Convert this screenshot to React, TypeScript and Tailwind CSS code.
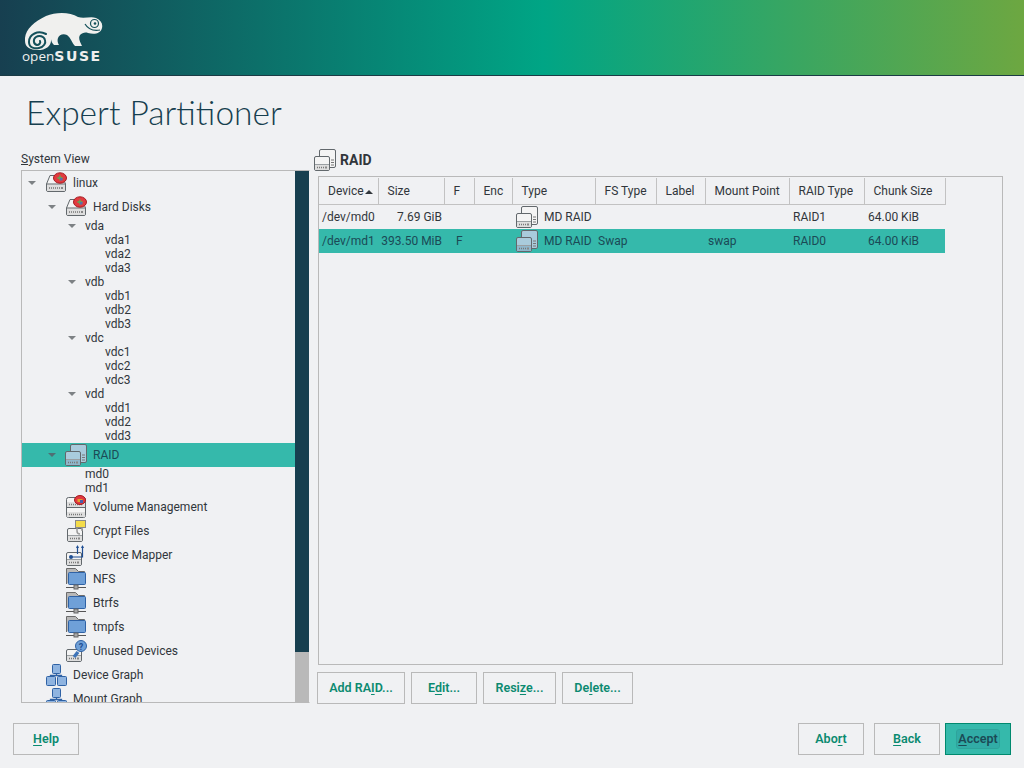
import React from "react"

const sans = "font-['Roboto',sans-serif]"

function Hdd({ x = 0, y = 0, w = 20, h = 13, tint = false }: { x?: number; y?: number; w?: number; h?: number; tint?: boolean }) {
  const face = tint ? "#a9cbdc" : "#f4f4f4"
  const low = tint ? "#8fb6cb" : "#dedede"
  return (
    <g>
      <rect x={x + 0.5} y={y + 0.5} width={w - 1} height={h - 1} rx="1.5" fill={face} stroke="#62686c" />
      <rect x={x + 1} y={y + h - 6} width={w - 2} height="5" fill={low} />
      <path d={`M${x + 1} ${y + h - 6.5}h${w - 2}`} stroke="#9a9fa2" />
      <path d={`M${x + 3} ${y + h - 3.5}h${w - 9}`} stroke="#777" strokeWidth="1.5" strokeDasharray="1 1" />
      <rect x={x + w - 5} y={y + h - 4.5} width="2" height="2" fill="#888" />
    </g>
  )
}

function DiskIcon() {
  return (
    <svg width="22" height="24" viewBox="0 0 22 24" className="shrink-0">
      <path d="M1.500 13L5 4.500H17L20.500 13V19a1.500 1.500 0 0 1-1.500 1.500H3A1.500 1.500 0 0 1 1.500 19z" fill="#f4f4f4" stroke="#62686c" />
      <path d="M2 13.500h18v6.500H2z" fill="#dedede" />
      <path d="M1.500 13h19" stroke="#62686c" />
      <path d="M4 17h11" stroke="#777" strokeWidth="1.500" strokeDasharray="1 1" />
      <rect x="16" y="16" width="2" height="2" fill="#888" />
      <ellipse cx="15" cy="7" rx="6.500" ry="5.200" fill="#e23a3f" stroke="#a51d22" />
      <path d="M15 4.500v5M12.500 7h5" stroke="#6f9a55" strokeWidth="1.800" />
      <path d="M15 7h2.500v2.500H15z" fill="#5a6ea8" />
    </svg>
  )
}

function RaidIcon({ tint = false }: { tint?: boolean }) {
  const face = tint ? "#a9cbdc" : "#f4f4f4"
  return (
    <svg width="22" height="24" viewBox="0 0 22 24" className="shrink-0">
      <rect x="5.500" y="1.500" width="16" height="18" rx="1.500" fill={face} stroke="#62686c" />
      <path d="M17 12h3M17 14.500h3M17 17h3" stroke="#777" />
      <Hdd x={0} y={8} w={16} h={15} tint={tint} />
    </svg>
  )
}

function VolumeIcon() {
  return (
    <svg width="22" height="24" viewBox="0 0 22 24" className="shrink-0">
      <rect x="1.500" y="2.500" width="19" height="20" rx="2" fill="#f4f4f4" stroke="#62686c" />
      <path d="M1.500 12.500h19" stroke="#62686c" />
      <rect x="2" y="7" width="18" height="5" fill="#dedede" />
      <rect x="2" y="17" width="18" height="5" fill="#dedede" />
      <path d="M4 9.500h14M4 19.500h14" stroke="#777" strokeWidth="1.500" strokeDasharray="1 1" />
      <ellipse cx="15" cy="5" rx="5.500" ry="4.500" fill="#e23a3f" stroke="#a51d22" />
      <path d="M12.500 4h5v3h-5z" fill="#e0a030" />
      <path d="M15 5h3v3h-3z" fill="#4a5ea8" />
    </svg>
  )
}

function CryptIcon() {
  return (
    <svg width="22" height="24" viewBox="0 0 22 24" className="shrink-0">
      <Hdd x={2} y={9} w={16} h={14} />
      <rect x="10.500" y="1.500" width="10" height="7" fill="#f4dc4a" stroke="#8a8a8a" />
      <path d="M12 9v3a3 3 0 0 0 3 3M17 9v3" fill="none" stroke="#9a9a9a" strokeWidth="1.500" />
    </svg>
  )
}

function MapperIcon() {
  return (
    <svg width="22" height="24" viewBox="0 0 22 24" className="shrink-0">
      <Hdd x={1} y={9} w={16} h={14} />
      <circle cx="6" cy="14" r="2" fill="#1f4e93" />
      <path d="M6 14h11.500V3M12.500 11V3" fill="none" stroke="#1f4e93" strokeWidth="1.200" />
      <path d="M11 5l1.500-3L14 5zM16 5l1.500-3L19 5z" fill="#1f4e93" />
    </svg>
  )
}

function FolderNetIcon() {
  return (
    <svg width="22" height="24" viewBox="0 0 22 24" className="shrink-0">
      <path d="M1.500 17V1.500h9l3 3h6V6" fill="#b8b8b8" stroke="#6b6b6b" />
      <rect x="3.500" y="5.500" width="17" height="12" rx="1" fill="#6fa0d8" stroke="#2f62a5" />
      <path d="M1 20.500h20" stroke="#555" />
      <rect x="9" y="18" width="4" height="4" fill="#a8a8a8" stroke="#666" />
    </svg>
  )
}

function UnusedIcon() {
  return (
    <svg width="22" height="24" viewBox="0 0 22 24" className="shrink-0">
      <Hdd x={1} y={10} w={16} h={13} />
      <path d="M9 18l4-5" stroke="#3f74b8" strokeWidth="3.500" />
      <circle cx="16" cy="7" r="5.500" fill="#6fa0d8" stroke="#2f62a5" />
      <text x="16" y="10.500" textAnchor="middle" fontSize="9" fontWeight="700" fontFamily="Roboto, sans-serif" fill="#1f4e93">?</text>
    </svg>
  )
}

function GraphIcon() {
  return (
    <svg width="22" height="24" viewBox="0 0 22 24" className="shrink-0">
      <path d="M11.500 10v3M5.500 14v-1.500h11V14" fill="none" stroke="#2f62a5" strokeWidth="1.300" />
      <rect x="7.500" y="1.500" width="8" height="9" rx="1" fill="#8fb4e0" stroke="#2f62a5" />
      <rect x="1.500" y="13.500" width="9" height="9" rx="1" fill="#8fb4e0" stroke="#2f62a5" />
      <rect x="12.500" y="13.500" width="9" height="9" rx="1" fill="#8fb4e0" stroke="#2f62a5" />
    </svg>
  )
}

function Logo() {
  return (
    <div className="flex flex-col w-[84px] h-[52px] shrink-0">
      <svg width="80" height="38" viewBox="25 13 80 38" className="ml-[3px] shrink-0">
        <path
          d="M25 41C24 31 33 22 46 16C56 12 70 12 78 17C84 19 91 16 96 18C101 20 103 24 102 28C101 33 95 35 88 33C85 32 82 33 80 35C78 38 80 42 82 46H75C72 43 71 38 67 35C63 33 59 35 58 38C57 41 58 43 59 45H54C52 43 51 41 51 38C52 46 46 50 38 50C30 50 25 47 25 41Z"
          fill="#f0f0ee"
        />
        <path
          d="M46 34C38 30 29 34 29 42C29 48 35 49 39 48C44 47 46 43 45 40C44 36 39 35 36 37C33 39 33 44 37 45C39 45 41 43 40 41"
          fill="none"
          stroke="#14505a"
          strokeWidth="2"
          strokeLinecap="round"
        />
        <circle cx="94.500" cy="23.500" r="4" fill="none" stroke="#14505a" strokeWidth="1.200" />
        <circle cx="95" cy="23.500" r="1.300" fill="#14505a" />
        <path d="M85 24C88 29 94 31 100 30" fill="none" stroke="#14505a" strokeWidth="1.200" />
      </svg>
      <div className="flex items-baseline leading-[14px] -mt-[2px] text-[#f0f0ee]">
        <span className="text-[13.500px] font-['Open_Sans',sans-serif]">open</span>
        <span className="text-[14px] font-bold tracking-[1.600px] font-['DejaVu_Sans',sans-serif]">SUSE</span>
      </div>
    </div>
  )
}

type TreeRow = {
  label: string
  pad: string
  tall?: boolean
  arrow?: boolean
  selected?: boolean
  icon?: React.ReactNode
}

const treeRows: TreeRow[] = [
  { label: "linux", pad: "pl-[6px]", tall: true, arrow: true, icon: <DiskIcon /> },
  { label: "Hard Disks", pad: "pl-[26px]", tall: true, arrow: true, icon: <DiskIcon /> },
  { label: "vda", pad: "pl-[46px]", arrow: true },
  { label: "vda1", pad: "pl-[83px]" },
  { label: "vda2", pad: "pl-[83px]" },
  { label: "vda3", pad: "pl-[83px]" },
  { label: "vdb", pad: "pl-[46px]", arrow: true },
  { label: "vdb1", pad: "pl-[83px]" },
  { label: "vdb2", pad: "pl-[83px]" },
  { label: "vdb3", pad: "pl-[83px]" },
  { label: "vdc", pad: "pl-[46px]", arrow: true },
  { label: "vdc1", pad: "pl-[83px]" },
  { label: "vdc2", pad: "pl-[83px]" },
  { label: "vdc3", pad: "pl-[83px]" },
  { label: "vdd", pad: "pl-[46px]", arrow: true },
  { label: "vdd1", pad: "pl-[83px]" },
  { label: "vdd2", pad: "pl-[83px]" },
  { label: "vdd3", pad: "pl-[83px]" },
  { label: "RAID", pad: "pl-[26px]", tall: true, arrow: true, selected: true, icon: <RaidIcon tint /> },
  { label: "md0", pad: "pl-[63px]" },
  { label: "md1", pad: "pl-[63px]" },
  { label: "Volume Management", pad: "pl-[43px]", tall: true, icon: <VolumeIcon /> },
  { label: "Crypt Files", pad: "pl-[43px]", tall: true, icon: <CryptIcon /> },
  { label: "Device Mapper", pad: "pl-[43px]", tall: true, icon: <MapperIcon /> },
  { label: "NFS", pad: "pl-[43px]", tall: true, icon: <FolderNetIcon /> },
  { label: "Btrfs", pad: "pl-[43px]", tall: true, icon: <FolderNetIcon /> },
  { label: "tmpfs", pad: "pl-[43px]", tall: true, icon: <FolderNetIcon /> },
  { label: "Unused Devices", pad: "pl-[43px]", tall: true, icon: <UnusedIcon /> },
  { label: "Device Graph", pad: "pl-[23px]", tall: true, icon: <GraphIcon /> },
  { label: "Mount Graph", pad: "pl-[23px]", tall: true, icon: <GraphIcon /> },
]

function Tree() {
  return (
    <div className="flex h-[533px] border-y border-l border-r border-[#b9b9b9] border-r-transparent overflow-hidden">
      <div className="flex-1 min-w-0">
        {treeRows.map((row) => (
          <div
            key={row.label}
            className={`flex items-center whitespace-nowrap ${row.pad} ${row.tall ? "h-[24px]" : "h-[14px]"} ${row.selected ? "bg-[#35b9ab] text-[#1b4a56]" : ""}`}
          >
            {row.arrow && (
              <span className={`w-0 h-0 mr-[9px] border-x-[4px] border-x-transparent border-t-[4px] shrink-0 ${row.selected ? "border-t-[#4f6f74]" : "border-t-[#7d8184]"}`} />
            )}
            {row.icon}
            <span className={row.icon ? "ml-[6px]" : ""}>{row.label}</span>
          </div>
        ))}
      </div>
      <div className="w-[14px] shrink-0 flex flex-col bg-[#b9b9b9]">
        <div className="h-[481px] bg-[#173f4f]" />
      </div>
    </div>
  )
}

const headers = [
  { label: "Device", width: "w-[59px]", sort: true },
  { label: "Size", width: "w-[66px]" },
  { label: "F", width: "w-[30px]" },
  { label: "Enc", width: "w-[38px]" },
  { label: "Type", width: "w-[83px]" },
  { label: "FS Type", width: "w-[61px]" },
  { label: "Label", width: "w-[49px]" },
  { label: "Mount Point", width: "w-[84px]" },
  { label: "RAID Type", width: "w-[75px]" },
  { label: "Chunk Size", width: "w-[81px]" },
]

const devices = [
  { device: "/dev/md0", size: "7.69 GiB", f: "", fs: "", mount: "", raid: "RAID1", chunk: "64.00 KiB", selected: false },
  { device: "/dev/md1", size: "393.50 MiB", f: "F", fs: "Swap", mount: "swap", raid: "RAID0", chunk: "64.00 KiB", selected: true },
]

function DeviceTable() {
  return (
    <div className="h-[489px] border border-[#b9b9b9] pt-[1px]">
      <table className="table-fixed border-collapse w-[626px]">
        <thead>
          <tr className="h-[26px]">
            {headers.map((h) => (
              <th key={h.label} className={`${h.width} p-0 pl-[9px] text-left font-normal border-r border-b border-[#c2c2c2] whitespace-nowrap`}>
                {h.label}
                {h.sort && <span className="inline-block align-middle ml-[1px] w-0 h-0 border-x-[4px] border-x-transparent border-b-[4px] border-b-[#31363b]" />}
              </th>
            ))}
          </tr>
        </thead>
        <tbody>
          {devices.map((d) => (
            <tr key={d.device} className={`h-[24px] ${d.selected ? "bg-[#35b9ab] text-[#1b4a56]" : ""}`}>
              <td className="p-0 pl-[3px] whitespace-nowrap">{d.device}</td>
              <td className="p-0 pr-[2px] text-right whitespace-nowrap">{d.size}</td>
              <td className="p-0 pl-[12px]">{d.f}</td>
              <td className="p-0" />
              <td className="p-0 pl-[4px] whitespace-nowrap">
                <div className="flex items-center gap-[6px]">
                  <RaidIcon tint={d.selected} />
                  <span>MD RAID</span>
                </div>
              </td>
              <td className="p-0 pl-[3px]">{d.fs}</td>
              <td className="p-0" />
              <td className="p-0 pl-[3px]">{d.mount}</td>
              <td className="p-0 pl-[4px]">{d.raid}</td>
              <td className="p-0 pl-[4px] whitespace-nowrap">{d.chunk}</td>
            </tr>
          ))}
        </tbody>
      </table>
    </div>
  )
}

function Btn({ width, before, mnemonic, after, primary }: { width: string; before: string; mnemonic: string; after: string; primary?: boolean }) {
  return (
    <button
      className={`${width} h-[32px] flex items-center justify-center border text-[12.500px] font-semibold shrink-0 ${primary ? "bg-[#35b9ab] border-[#00896e] text-[#1b4a56]" : "border-[#b9b9b9] text-[#0b8a70]"}`}
    >
      <span className={primary ? "px-[1px] rounded-[2px] bg-[#31aca6] outline outline-[#2ea39b]" : ""}>
        {before}
        <span className="underline underline-offset-2">{mnemonic}</span>
        {after}
      </span>
    </button>
  )
}

export default function App() {
  return (
    <div className={`w-[1024px] h-[768px] overflow-hidden bg-[#f0f1f3] text-[#31363b] text-[12px] ${sans}`}>
      <header className="h-[76px] flex items-start pl-[22px] pt-[13px] border-b border-[#1b3b45] bg-[linear-gradient(90deg,#173f50_0%,#00a585_53%,#6da741_100%)]">
        <Logo />
      </header>
      <h1 className="h-[72px] pl-[26px] pt-[15px] text-[33.500px] leading-[42px] font-light text-[#173f4f] font-['Lato',sans-serif]">
        Expert Partitioner
      </h1>
      <div className="flex pl-[21px] gap-[8px]">
        <div className="w-[289px] shrink-0">
          <div className="h-[22px] flex items-center">
            <span><span className="underline">S</span>ystem View</span>
          </div>
          <Tree />
        </div>
        <div className="w-[685px] shrink-0">
          <div className="h-[24px] mb-[4px] flex items-center -ml-[4px] gap-[4px] font-bold text-[14px]">
            <RaidIcon />
            <span>RAID</span>
          </div>
          <DeviceTable />
          <div className="flex gap-[6px] mt-[7px] -ml-[1px]">
            <Btn width="w-[88px]" before="Add RA" mnemonic="I" after="D..." />
            <Btn width="w-[66px]" before="E" mnemonic="d" after="it..." />
            <Btn width="w-[73px]" before="Resi" mnemonic="z" after="e..." />
            <Btn width="w-[71px]" before="De" mnemonic="l" after="ete..." />
          </div>
        </div>
      </div>
      <div className="flex justify-between pl-[13px] pr-[13px] mt-[19px]">
        <Btn width="w-[66px]" before="" mnemonic="H" after="elp" />
        <div className="flex">
          <Btn width="w-[66px]" before="Abo" mnemonic="r" after="t" />
          <div className="w-[10px]" />
          <Btn width="w-[66px]" before="" mnemonic="B" after="ack" />
          <div className="w-[5px]" />
          <Btn width="w-[66px]" before="" mnemonic="A" after="ccept" primary />
        </div>
      </div>
    </div>
  )
}
